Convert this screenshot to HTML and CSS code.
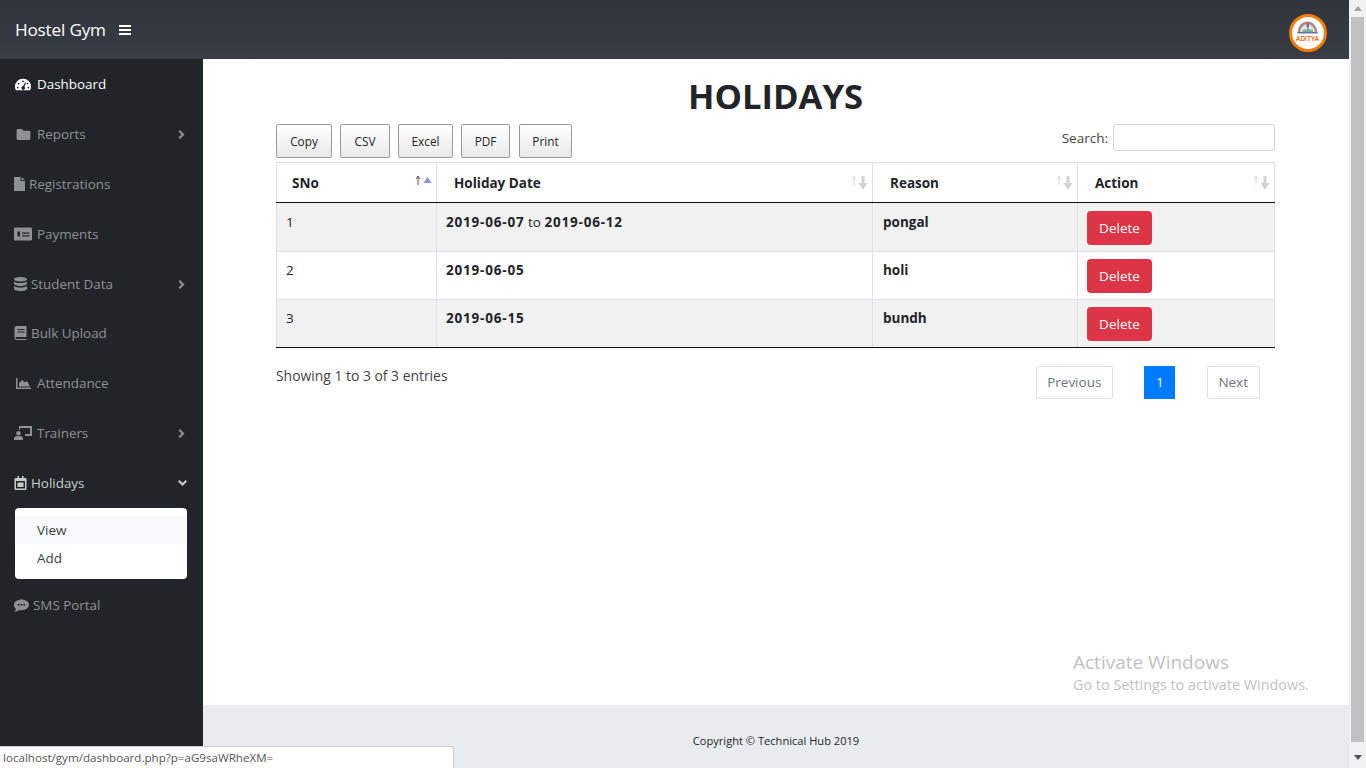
FILE: index.html
```html
<!DOCTYPE html>
<html>
<head>
    <title>Holidays</title>
    <link rel="stylesheet" href="styles.css">
</head>
<body>
    <div id="page">
        <div id="navbar">
            <span class="brand">Hostel Gym</span>
            <svg class="toggle" viewBox="0 0 12 10"><path d="M0 0h12v2H0zM0 4h12v2H0zM0 8h12v2H0z"/></svg>
            <div class="logo">
                <svg viewBox="0 0 30 30">
                    <path d="M4.500 15a10 11.500 0 0 1 20 0z" fill="#a98a80"/>
                    <path d="M7 15a7.500 9 0 0 1 15 0z" fill="#e3e6e4"/>
                    <path d="M8 15l3-4 2 1.500 2-5 2 5 2-1.500 2 4z" fill="#7fae9a"/>
                    <rect x="13.500" y="5" width="2.500" height="4" fill="#8a5fa8"/>
                    <rect x="4.500" y="14" width="20" height="1.500" fill="#6a6fa8"/>
                    <text x="14.500" y="23" class="logo-text">ADITYA</text>
                </svg>
            </div>
        </div>
        <div id="wrapper">
            <div id="sidebar">
                <a class="item active"><svg class="ic" viewBox="0 0 18 14"><path d="M9 1a9 9 0 0 0-9 9c0 1.500.5 3 1 4h16c.5-1 1-2.500 1-4a9 9 0 0 0-9-9zm0 2a1 1 0 1 1 0 2 1 1 0 0 1 0-2zM4 5.500a1 1 0 1 1 0 2 1 1 0 0 1 0-2zm10 0a1 1 0 1 1 0 2 1 1 0 0 1 0-2zM3 10a1 1 0 1 1 0 2 1 1 0 0 1 0-2zm12 0a1 1 0 1 1 0 2 1 1 0 0 1 0-2zM11.500 5l.9.4L10.700 10a2 2 0 1 1-1.800-.5z"/></svg><span class="gap-21">Dashboard</span></a>
                <a class="item"><svg class="ic folder" viewBox="0 0 15 12"><path d="M1.500 0h4l2 2h6A1.500 1.500 0 0 1 15 3.500v7a1.500 1.500 0 0 1-1.500 1.500h-12A1.500 1.500 0 0 1 0 10.500v-9A1.500 1.500 0 0 1 1.500 0z"/></svg><span class="gap-21">Reports</span><svg class="arrow" viewBox="0 0 8 12"><path d="M2 0l6 6-6 6-2-2 4-4-4-4z"/></svg></a>
                <a class="item"><svg class="ic doc" viewBox="0 0 11 14"><path d="M0 0h6.500v4H11v10H0zM7.500 0L11 3H7.500z"/></svg><span>Registrations</span></a>
                <a class="item"><svg class="ic pay" viewBox="0 0 18 13"><path fill-rule="evenodd" d="M1 0h16a1 1 0 0 1 1 1v11a1 1 0 0 1-1 1H1a1 1 0 0 1-1-1V1a1 1 0 0 1 1-1zm2.500 4v5h2.500V4zM8 5v1.200h7.500V5zm0 2.800V9h7.500V7.800z"/></svg><span class="gap-21">Payments</span></a>
                <a class="item"><svg class="ic db" viewBox="0 0 13 14"><path d="M6.500 0C10 0 13 1 13 2.300S10 4.600 6.500 4.600 0 3.600 0 2.300 3 0 6.500 0zM0 4.500c1.500 1 4 1.500 6.500 1.500S11.500 5.500 13 4.500v2.300C13 8 10 9 6.500 9S0 8 0 6.800zM0 9c1.500 1 4 1.500 6.500 1.500S11.500 10 13 9v2.700C13 13 10 14 6.500 14S0 13 0 11.700z"/></svg><span>Student Data</span><svg class="arrow" viewBox="0 0 8 12"><path d="M2 0l6 6-6 6-2-2 4-4-4-4z"/></svg></a>
                <a class="item bulk"><svg class="ic db" viewBox="0 0 12 14"><path fill-rule="evenodd" d="M2 0h10v11H2a1 1 0 0 0 0 2h10v1H2a2 2 0 0 1-2-2V2a2 2 0 0 1 2-2zm1 3v1h7V3zm0 2.500v1h7v-1z"/></svg><span>Bulk Upload</span></a>
                <a class="item"><svg class="ic chart" viewBox="0 0 15 11"><path d="M0 0h1.500v9.500H15V11H0zM3 8.500V5l3-3 3 2.500L11 3l3 5.500z"/></svg><span class="gap-21">Attendance</span></a>
                <a class="item"><svg class="ic trainer" viewBox="0 0 18 14"><path d="M5 0h13v10h-7V8h5V2H6v2H5zM4.500 5a2.300 2.300 0 1 1 0 4.600 2.300 2.300 0 0 1 0-4.600zM0 14v-1.500C0 11 1.500 10 3 10h3c1.500 0 3 1 3 2.500V14z"/></svg><span>Trainers</span><svg class="arrow" viewBox="0 0 8 12"><path d="M2 0l6 6-6 6-2-2 4-4-4-4z"/></svg></a>
                <a class="item open"><svg class="ic db" viewBox="0 0 12 14"><path fill-rule="evenodd" d="M3 0h1.500v2h3V0H9v2h2a1 1 0 0 1 1 1v10a1 1 0 0 1-1 1H1a1 1 0 0 1-1-1V3a1 1 0 0 1 1-1h2zM1.500 5v7.500h9V5zM3 6.500h6v4.500H3z"/></svg><span>Holidays</span><svg class="arrow down" viewBox="0 0 12 8"><path d="M0 2l2-2 4 4 4-4 2 2-6 6z"/></svg></a>
                <div class="submenu">
                    <a class="sub hover">View</a>
                    <a class="sub">Add</a>
                </div>
                <a class="item sms"><svg class="ic pay" viewBox="0 0 16 13"><path fill-rule="evenodd" d="M8 0c4.400 0 8 2.500 8 5.800s-3.600 5.800-8 5.800c-1 0-2-.1-2.800-.4C4 12.300 2 13 .5 13c.8-1 1.500-2 1.600-3C.8 9 0 7.500 0 5.800 0 2.500 3.600 0 8 0zM4 5v1.500h2V5zm3 0v1.500h2V5zm3 0v1.500h2V5z"/></svg><span>SMS Portal</span></a>
            </div>
            <div id="content">
                <div class="main">
                    <h1>HOLIDAYS</h1>
                    <div class="tools">
                        <div class="buttons">
                            <button class="dt-button">Copy</button>
                            <button class="dt-button">CSV</button>
                            <button class="dt-button">Excel</button>
                            <button class="dt-button">PDF</button>
                            <button class="dt-button">Print</button>
                        </div>
                        <label class="search">Search: <input type="text"></label>
                    </div>
                    <table>
                        <thead>
                            <tr>
                                <th class="c1">SNo
                                    <svg class="sort" viewBox="0 0 16 15"><path class="up-on" d="M2 10V2M0 4l2-3 2 3" /><path class="tri-on" d="M7.500 8l4-6 4 6z"/></svg>
                                </th>
                                <th class="c2">Holiday Date
                                    <svg class="sort" viewBox="0 0 16 15"><path class="up-off" d="M2 10V2M0 4l2-3 2 3"/><path class="down-off" d="M9.500 1h3v7h3l-4.500 7-4.500-7h3z"/></svg>
                                </th>
                                <th class="c3">Reason
                                    <svg class="sort" viewBox="0 0 16 15"><path class="up-off" d="M2 10V2M0 4l2-3 2 3"/><path class="down-off" d="M9.500 1h3v7h3l-4.500 7-4.500-7h3z"/></svg>
                                </th>
                                <th class="c4">Action
                                    <svg class="sort" viewBox="0 0 16 15"><path class="up-off" d="M2 10V2M0 4l2-3 2 3"/><path class="down-off" d="M9.500 1h3v7h3l-4.500 7-4.500-7h3z"/></svg>
                                </th>
                            </tr>
                        </thead>
                        <tbody>
                            <tr class="odd">
                                <td>1</td>
                                <td><strong class="date">2019-06-07</strong> to <strong class="date">2019-06-12</strong></td>
                                <td class="reason"><strong>pongal</strong></td>
                                <td><button class="btn-del">Delete</button></td>
                            </tr>
                            <tr>
                                <td>2</td>
                                <td><strong class="date">2019-06-05</strong></td>
                                <td class="reason"><strong>holi</strong></td>
                                <td><button class="btn-del">Delete</button></td>
                            </tr>
                            <tr class="odd">
                                <td>3</td>
                                <td><strong class="date">2019-06-15</strong></td>
                                <td class="reason"><strong>bundh</strong></td>
                                <td><button class="btn-del">Delete</button></td>
                            </tr>
                        </tbody>
                    </table>
                    <div class="below">
                        <div class="info">Showing 1 to 3 of 3 entries</div>
                        <div class="paging">
                            <a class="pg">Previous</a>
                            <a class="pg current">1</a>
                            <a class="pg">Next</a>
                        </div>
                    </div>
                </div>
                <div class="activate">
                    <div class="a1">Activate Windows</div>
                    <div class="a2">Go to Settings to activate Windows.</div>
                </div>
                <div id="footer">Copyright © Technical Hub 2019</div>
            </div>
        </div>
    </div>
    <div id="scrollbar">
        <span class="up"></span>
        <div class="thumb"></div>
        <span class="down"></span>
    </div>
    <div id="status">localhost/gym/dashboard.php?p=aG9saWRheXM=</div>
</body>
</html>
```

FILE: styles.css
```css
* {
    box-sizing: border-box;
}
html, body {
    height: 100%;
}
body {
    margin: 0;
    display: flex;
    overflow: hidden;
    font-family: "Open Sans", "Noto Sans", sans-serif;
    font-size: 14px;
    color: #212529;
    background-color: #fff;
}
#page {
    flex: 1;
    display: flex;
    flex-direction: column;
    min-width: 0;
}
#navbar {
    height: 59px;
    display: flex;
    align-items: center;
    padding: 0 22px 0 15px;
    background: linear-gradient(#30343b, #383d46);
}
.brand {
    font-size: 17.2px;
    color: #fff;
    letter-spacing: -0.2px;
}
.toggle {
    width: 12px;
    height: 10px;
    margin-left: 13px;
    fill: #fff;
}
.logo {
    margin-left: auto;
    align-self: flex-start;
    margin-top: 14px;
    width: 38px;
    height: 38px;
    padding: 1px;
    border: 3px solid #f57c00;
    border-radius: 50%;
    background-color: #fff;
}
.logo svg {
    display: block;
    width: 30px;
    height: 30px;
}
.logo-text {
    font-size: 6.5px;
    font-weight: 700;
    fill: #e8741a;
    text-anchor: middle;
    font-family: "Liberation Sans", sans-serif;
}
#wrapper {
    flex: 1;
    display: flex;
    min-height: 0;
}
#sidebar {
    width: 203px;
    flex-shrink: 0;
    padding: 0 16px 0 15px;
    background-color: #212529;
}
.item {
    height: 50px;
    display: flex;
    align-items: center;
    color: #8e9296;
    font-size: 13.4px;
}
.item.bulk {
    margin-top: -1px;
}
.item.active {
    color: #fff;
}
.item.open {
    color: #c9cccf;
}
.ic {
    width: 16px;
    height: 14px;
    flex-shrink: 0;
    fill: currentColor;
}
.ic.folder {
    width: 15px;
    height: 11px;
    margin-left: 1px;
}
.ic.doc {
    width: 11px;
    margin-left: -1px;
    margin-right: 4px;
}
.ic.db {
    width: 13px;
    margin-left: -1px;
    margin-right: 4px;
}
.ic.chart {
    width: 15px;
    height: 11px;
    margin-left: 1px;
}
.ic.trainer {
    width: 18px;
    margin-left: -1px;
    margin-right: 5px;
}
.ic.pay {
    width: 18px;
    margin-left: -1px;
    margin-right: -1px;
}
.gap-21 {
    margin-left: 6px;
}
.arrow {
    width: 7px;
    height: 9px;
    margin-left: auto;
    margin-right: 2px;
    fill: #8e9296;
}
.arrow.down {
    width: 9px;
    height: 6px;
    margin-right: 0;
    fill: #c9cccf;
}
.submenu {
    height: 71px;
    padding: 8px 0 7px;
    border-radius: 4px;
    background-color: #fff;
}
.sub {
    display: block;
    height: 28px;
    line-height: 28px;
    padding-left: 22px;
    color: #3a3f44;
    font-size: 13.5px;
}
.sub.hover {
    background-color: #f8f9fa;
}
.item.sms {
    margin-top: 1px;
}
.sms .ic.pay {
    width: 15px;
    height: 13px;
    margin-right: 4px;
}
#content {
    flex: 1;
    min-width: 0;
    display: flex;
    flex-direction: column;
    position: relative;
}
.main {
    flex: 1;
    padding: 14px 74px 0 73px;
}
h1 {
    margin: 0 0 6px;
    font-size: 34.6px;
    line-height: 45px;
    font-weight: 700;
    text-align: center;
}
.tools {
    display: flex;
    justify-content: space-between;
    align-items: flex-start;
    height: 38px;
}
.buttons {
    display: flex;
    gap: 8px;
}
.dt-button {
    height: 34px;
    padding: 0;
    border: 1px solid #999;
    border-radius: 2px;
    background: linear-gradient(#fff, #e9e9e9);
    color: #212529;
    font-family: "Open Sans", sans-serif;
    font-size: 11.8px;
}
.dt-button:nth-child(1) { width: 56px; }
.dt-button:nth-child(2) { width: 50px; }
.dt-button:nth-child(3) { width: 55px; }
.dt-button:nth-child(4) { width: 49px; }
.dt-button:nth-child(5) { width: 53px; margin-left: 1px; }
.search {
    display: flex;
    align-items: center;
    gap: 5px;
    font-size: 13.5px;
    color: #3f4448;
}
.search input {
    width: 162px;
    height: 27px;
    border: 1px solid #ced4da;
    border-radius: 3px;
}
table {
    width: 999px;
    table-layout: fixed;
    border-collapse: collapse;
    font-size: 13.5px;
}
th, td {
    border: 1px solid #dee2e6;
    vertical-align: top;
    text-align: left;
}
th {
    position: relative;
    height: 40px;
    padding: 11px 17px 0;
    border-bottom: 1px solid #111;
    font-weight: 700;
    color: #212529;
}
th.c1 {
    padding-left: 15px;
}
.c1 { width: 160px; }
.c2 { width: 436px; }
.c3 { width: 205px; }
.sort {
    position: absolute;
    top: 12px;
    right: 4px;
    width: 16px;
    height: 15px;
}
.up-on, .up-off {
    fill: none;
    stroke-width: 1;
}
.up-on {
    stroke: #6d4a55;
}
.up-off {
    stroke: #d8d8d8;
}
.tri-on {
    fill: #8c8fdc;
}
.down-off {
    fill: #d2d2d2;
}
td {
    height: 48px;
    padding: 9px 9px 0;
}
td.reason {
    padding-left: 10px;
}
tr.odd td {
    background-color: #f1f1f1;
}
tbody tr:last-child td {
    border-bottom: 1px solid #111;
}
td:last-child {
    padding: 7px 9px 0;
}
tbody tr:first-child td {
    height: 49px;
    padding-top: 10px;
}
tbody tr:first-child td:last-child {
    padding-top: 8px;
}
.date {
    letter-spacing: 0.8px;
}
.btn-del {
    display: block;
    width: 65px;
    height: 34px;
    border: none;
    border-radius: 4px;
    background-color: #dc3545;
    color: #fff;
    font-family: "Open Sans", sans-serif;
    font-size: 13.5px;
}
.below {
    display: flex;
    justify-content: space-between;
    align-items: flex-start;
    padding-top: 18px;
}
.info {
    font-size: 13.9px;
    color: #3f4448;
}
.paging {
    display: flex;
    gap: 31px;
    margin-right: 15px;
}
.pg {
    height: 33px;
    line-height: 31px;
    padding: 0 11px 0 10px;
    border: 1px solid #dee2e6;
    border-radius: 2px;
    color: #6c757d;
    font-size: 13.5px;
}
.pg:last-child {
    margin-left: 1px;
}
.pg.current {
    width: 31px;
    padding: 0;
    text-align: center;
    border: none;
    line-height: 33px;
    border-radius: 0;
    color: #fff;
    background-color: #007bff;
}
.activate {
    position: absolute;
    left: 870px;
    top: 591px;
    color: #bfc2c5;
}
.a1 {
    font-size: 19px;
    line-height: 24px;
}
.a2 {
    font-size: 14.4px;
    line-height: 21px;
}
#footer {
    height: 63px;
    padding-top: 28px;
    text-align: center;
    font-size: 11.1px;
    background-color: #e9ecef;
}
#scrollbar {
    width: 17px;
    flex-shrink: 0;
    display: flex;
    flex-direction: column;
    align-items: center;
    background-color: #f1f1f1;
}
#scrollbar .up {
    margin-top: 6px;
    border-left: 4px solid transparent;
    border-right: 4px solid transparent;
    border-bottom: 5px solid #a3a3a3;
}
#scrollbar .thumb {
    width: 13px;
    height: 725px;
    margin-top: 6px;
    background-color: #c1c1c1;
}
#scrollbar .down {
    margin-top: 13px;
    border-left: 4px solid transparent;
    border-right: 4px solid transparent;
    border-top: 5px solid #505050;
}
#status {
    position: absolute;
    left: 0;
    bottom: 0;
    width: 454px;
    height: 22px;
    padding-left: 3px;
    line-height: 22px;
    border: 1px solid #d0d0d0;
    border-left: none;
    border-bottom: none;
    border-radius: 0 3px 0 0;
    background-color: #fff;
    color: #555;
    font-size: 11.6px;
}
```
